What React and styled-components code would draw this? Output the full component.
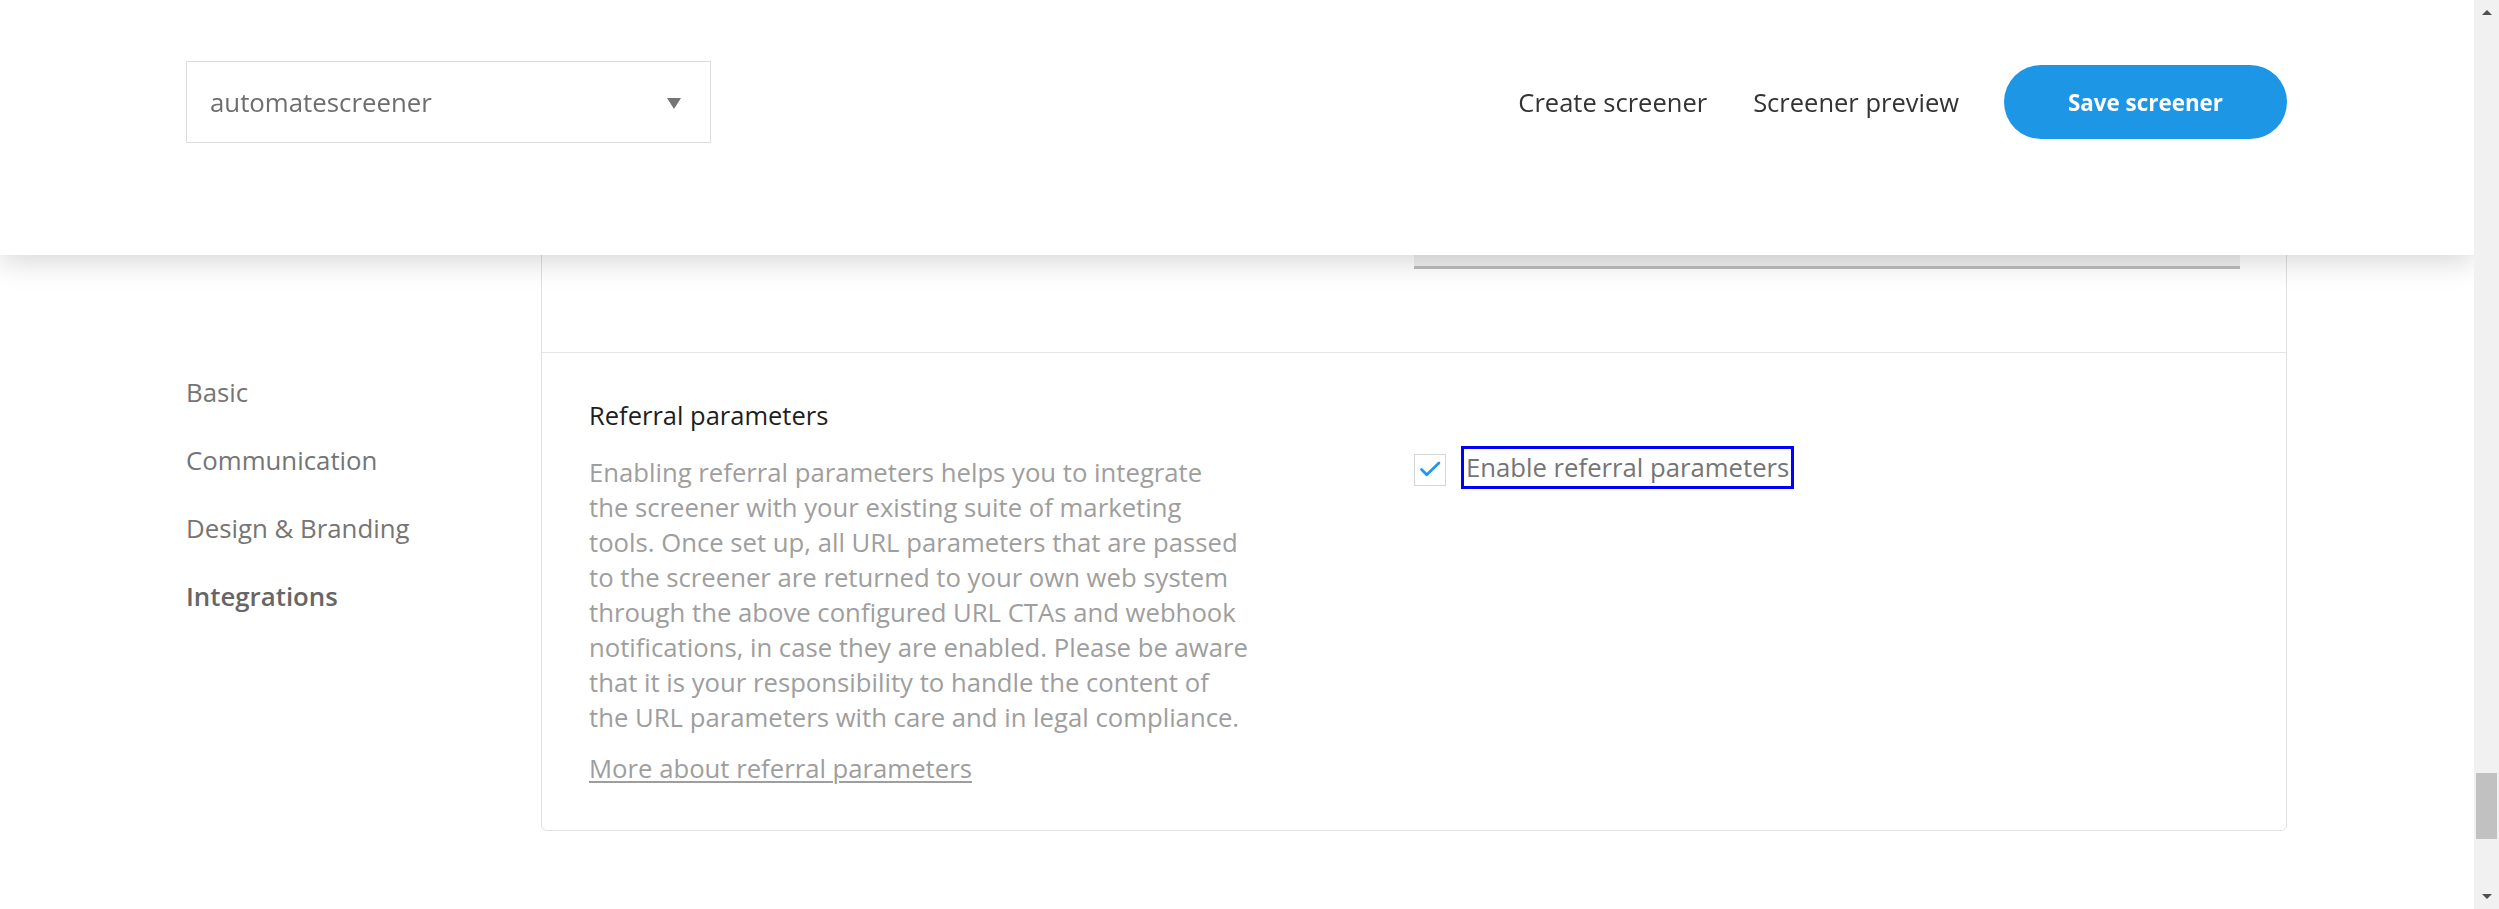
import React from 'react';
import styled, { createGlobalStyle } from 'styled-components';

const GlobalStyle = createGlobalStyle`
  html, body {
    margin: 0;
    padding: 0;
    overflow: hidden;
    background: #fff;
    font-family: "Open Sans", "Noto Sans", sans-serif;
  }
  * { box-sizing: border-box; }
`;

const Header = styled.header`
  position: fixed;
  top: 0;
  left: 0;
  right: 25px;
  height: 255px;
  background: #fff;
  z-index: 10;
  box-shadow: 0 6px 28px rgba(0, 0, 0, 0.17);
  padding: 61px 187px 0 186px;`, HeaderBar = styled.div`
  display: flex;
  align-items: center;
  height: 82px;`, Select = styled.div`
  width: 525px;
  height: 82px;
  border: 1px solid #dcdcdc;
  display: flex;
  align-items: center;
  justify-content: space-between;
  padding: 0 29px 0 23px;
  font-size: 25.8px;
  color: #6e6e6e;`, Caret = styled.span`
  width: 0;
  height: 0;
  border-left: 7.5px solid transparent;
  border-right: 7.5px solid transparent;
  border-top: 11px solid #757575;
  margin-top: 3px;`, Spacer = styled.div`flex: 1;`,
  NavLink = styled.a`
  font-size: 25.5px;
  color: #333;
  text-decoration: none;
  margin-right: ${({ gap }) => gap}px;`, SaveButton = styled.button`
  width: 283px;
  height: 74px;
  border: none;
  border-radius: 37px;
  background: #1e96e6;
  color: #fff;
  font-family: "Open Sans", sans-serif;
  font-weight: 700;
  font-size: 22.4px;
  padding: 0;`;

const Main = styled.main`
  display: grid;
  grid-template-columns: 355px 1746px;
  padding-left: 186px;
  align-items: start;`, SideNav = styled.nav`
  padding-top: 375px;
  display: flex;
  flex-direction: column;`, SideItem = styled.div`
  font-size: 25.8px;
  line-height: 35px;
  margin-bottom: 33px;
  color: ${({ active }) => active ? '#666' : '#757575'};
  font-weight: ${({ active }) => active ? 600 : 400};`;

const Card = styled.section`
  border: 1px solid #e0e0e0;
  border-radius: 6px;
  background: #fff;`, CardRow = styled.div`
  display: grid;
  grid-template-columns: 825px 1fr;
  padding: ${({ pad }) => pad};
  border-top: ${({ divided }) => divided ? '1px solid #e6e6e6' : 'none'};
  height: ${({ h }) => h || 'auto'};
  align-items: ${({ align }) => align || 'start'};`, FakeInput = styled.div`
  grid-column: 2;
  height: 150px;
  background: #f0f0f0;
  border-bottom: 3px solid #bdbdbd;`, Title = styled.h3`
  margin: 0 0 22px;
  font-size: 25.5px;
  line-height: 35px;
  font-weight: 400;
  color: #1e1e1e;`, Desc = styled.p`
  margin: 0 0 16px;
  font-size: 25.7px;
  line-height: 35px;
  white-space: nowrap;
  color: #9e9e9e;`, MoreLink = styled.a`
  font-size: 25.7px;
  line-height: 35px;
  color: #9e9e9e;
  text-decoration: underline;
  text-underline-offset: 3px;
  text-decoration-thickness: 2px;`, Options = styled.div`
  padding-top: 51px;`, CheckRow = styled.div`
  display: flex;
  align-items: flex-start;
  gap: 18px;`, Box = styled.span`
  width: 32px;
  height: 32px;
  margin-top: 5px;
  border: 1px solid #d6d6d6;
  display: flex;
  align-items: center;
  justify-content: center;`, CheckLabel = styled.label`
  font-size: 25.7px;
  line-height: 35px;
  padding: 1px 2px;
  color: #757575;
  outline: 3px solid #0000ff;`;

const Scrollbar = styled.aside`
  position: fixed;
  top: 0;
  right: 0;
  width: 25px;
  height: 909px;
  background: #f1f1f1;
  display: flex;
  flex-direction: column;
  z-index: 20;`, ArrowBtn = styled.div`
  height: 25px;
  display: flex;
  align-items: center;
  justify-content: center;`, Tri = styled.span`
  width: 0;
  height: 0;
  border-left: 5.5px solid transparent;
  border-right: 5.5px solid transparent;
  ${({ up }) => up ? 'border-bottom: 5px solid #505050;' : 'border-top: 5px solid #505050;'}`,
  Track = styled.div`
  flex: 1;
  padding: 0 2px;`, Thumb = styled.div`
  height: 66px;
  background: #c1c1c1;`;

function Check() {
  return <svg width="32" height="32" viewBox="0 0 32 32">
    <polyline points="7,15.5 12.5,21 25.5,8.5" fill="none" stroke="#2196f3"
      strokeWidth="3" strokeLinecap="round" strokeLinejoin="round" />
  </svg>;
}

const sideItems = ['Basic', 'Communication', 'Design & Branding', 'Integrations'];

// wrapped as in the original column
const descLines = [
  'Enabling referral parameters helps you to integrate',
  'the screener with your existing suite of marketing',
  'tools. Once set up, all URL parameters that are passed',
  'to the screener are returned to your own web system',
  'through the above configured URL CTAs and webhook',
  'notifications, in case they are enabled. Please be aware',
  'that it is your responsibility to handle the content of',
  'the URL parameters with care and in legal compliance.'
];

export default function App() {
  return <>
    <GlobalStyle />
    <Header>
      <HeaderBar>
        <Select>automatescreener<Caret /></Select>
        <Spacer />
        <NavLink gap={46}>Create screener</NavLink>
        <NavLink gap={45}>Screener preview</NavLink>
        <SaveButton>Save screener</SaveButton>
      </HeaderBar>
    </Header>
    <Main>
      <SideNav>
        {sideItems.map(item =>
          <SideItem key={item} active={item === 'Integrations'}>{item}</SideItem>)}
      </SideNav>
      <Card>
        <CardRow h="351px" align="end" pad="0 46px 83px 47px">
          <FakeInput />
        </CardRow>
        <CardRow divided pad="45px 46px 44px 47px">
          <div>
            <Title>Referral parameters</Title>
            <Desc>
              {descLines.map((line, i) =>
                <React.Fragment key={i}>{line}{i < descLines.length - 1 && <br />}</React.Fragment>)}
            </Desc>
            <MoreLink>More about referral parameters</MoreLink>
          </div>
          <Options>
            <CheckRow>
              <Box><Check /></Box>
              <CheckLabel>Enable referral parameters</CheckLabel>
            </CheckRow>
          </Options>
        </CardRow>
      </Card>
    </Main>
    <Scrollbar>
      <ArrowBtn><Tri up /></ArrowBtn>
      <Track><Thumb style={{ marginTop: 748 }} /></Track>
      <ArrowBtn><Tri /></ArrowBtn>
    </Scrollbar>
  </>;
}
